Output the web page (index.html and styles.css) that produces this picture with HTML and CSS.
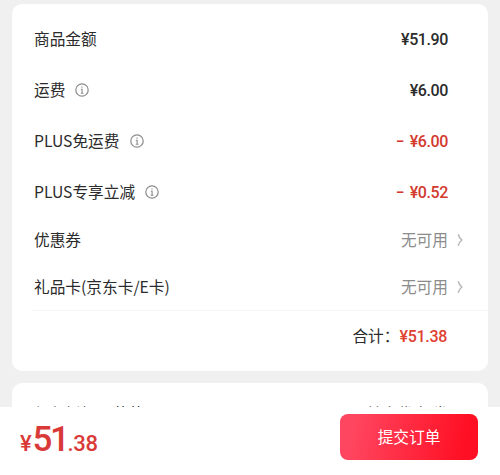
FILE: index.html
```html
<!DOCTYPE html>
<html lang="zh-CN">

<head>
    <meta charset="UTF-8">
    <meta name="viewport" content="width=device-width, initial-scale=1.0">
    <title>确认订单</title>
    <link rel="stylesheet" href="styles.css">
</head>

<body>
    <svg class="symbols" width="0" height="0">
        <symbol id="info" viewBox="0 0 14 14">
            <circle cx="7" cy="7" r="6.2" fill="none" stroke="currentColor" stroke-width="1.2" />
            <path d="M7 3.4v1.4M5.8 6.2H7.1v4M5.8 10.2h2.6" fill="none" stroke="currentColor" stroke-width="1.1" />
        </symbol>
        <symbol id="arrow" viewBox="0 0 6 14">
            <path d="M1.2 1.2C1.8 3.6 3 5.5 4.8 7C3 8.5 1.8 10.4 1.2 12.8" fill="none" stroke="currentColor" stroke-width="1.5" />
        </symbol>
    </svg>

    <main class="content">
        <!-- 金额明细 -->
        <section class="card">
            <div class="row">
                <span class="label">商品金额</span>
                <span class="price">¥51.90</span>
            </div>
            <div class="row">
                <span class="label">运费</span>
                <svg class="info"><use href="#info" /></svg>
                <span class="price">¥6.00</span>
            </div>
            <div class="row">
                <span class="label">PLUS免运费</span>
                <svg class="info"><use href="#info" /></svg>
                <span class="price discount"><span class="minus">–</span>¥6.00</span>
            </div>
            <div class="row">
                <span class="label">PLUS专享立减</span>
                <svg class="info"><use href="#info" /></svg>
                <span class="price discount"><span class="minus">–</span>¥0.52</span>
            </div>
            <div class="row link">
                <span class="label">优惠券</span>
                <span class="none">无可用</span>
                <svg class="arrow"><use href="#arrow" /></svg>
            </div>
            <div class="row link">
                <span class="label">礼品卡(京东卡/E卡)</span>
                <span class="none">无可用</span>
                <svg class="arrow"><use href="#arrow" /></svg>
            </div>
            <div class="total">
                <span class="total-label">合计：</span>
                <span class="total-price">¥51.38</span>
            </div>
        </section>

        <!-- 下一张卡片，被底部栏遮住 -->
        <section class="card">
            <div class="row next">
                <span class="label">红包抵扣、节节</span>
                <span class="none">首次优惠 券</span>
            </div>
        </section>
    </main>

    <!-- 底部提交栏 -->
    <footer class="submit-bar">
        <div class="amount">¥<span class="big">51</span>.38</div>
        <button class="submit-btn">提交订单</button>
    </footer>
</body>

</html>
```
FILE: styles.css
```css
* {
    box-sizing: border-box;
}

body {
    font-family: "Noto Sans CJK SC", sans-serif;
    font-size: 15.7px;
    margin: 0;
    height: 475px;
    background-color: #f0f0f0;
    color: #2b2b2b;
    display: flex;
    flex-direction: column;
    overflow: hidden;
}

.symbols {
    position: absolute;
}

.content {
    height: 407px;
    padding: 4px 12px 0;
    overflow: hidden;
}

.card {
    background-color: #fff;
    border-radius: 10px;
    margin-bottom: 12px;
    padding-top: 9px;
}

.row {
    display: flex;
    align-items: center;
    height: 51px;
    padding: 0 40px 0 22px;
    line-height: 24px;
}

.link {
    height: 46.5px;
    padding-right: 25px;
}

.label {
    white-space: nowrap;
}

.info {
    width: 14px;
    height: 14px;
    margin-left: 10px;
    color: #8c8c8c;
}

.price,
.total-price,
.amount {
    font-family: Roboto, sans-serif;
    font-weight: 500;
}

.price {
    margin-left: auto;
    padding-top: 2px;
    font-size: 16px;
    letter-spacing: -0.4px;
}

.discount {
    color: #d23a2e;
}

.minus {
    display: inline-block;
    margin-right: 5px;
    transform: scaleX(0.8);
}

.none {
    margin-left: auto;
    color: #8c8c8c;
}

.arrow {
    width: 6px;
    height: 14px;
    margin-left: 9px;
    color: #b8b8b8;
}

.total {
    display: flex;
    align-items: center;
    justify-content: flex-end;
    height: 61px;
    margin-left: 20px;
    padding: 0 41px 9px 0;
    border-top: 1px solid #f6f6f6;
}

.total-label {
    margin-top: -2px;
}

.total-price {
    color: #e0402f;
    font-size: 16px;
    letter-spacing: -0.3px;
}

.next {
    height: 43px;
}

.next .none {
    color: #2b2b2b;
}

.submit-bar {
    display: flex;
    align-items: flex-start;
    justify-content: space-between;
    height: 68px;
    padding: 7px 22px 0 20px;
    background-color: #fff;
}

.amount {
    color: #d93a38;
    font-size: 22px;
    line-height: 51px;
    letter-spacing: -0.3px;
}

.big {
    font-size: 35px;
    margin-left: 1px;
    letter-spacing: -2.4px;
}

.submit-btn {
    width: 138px;
    height: 46px;
    padding: 0 0 1px;
    border: none;
    border-radius: 8px;
    background: linear-gradient(100deg, #ff4660 10%, #ff0f23 90%);
    color: #fff;
    font-family: inherit;
    font-size: 15.7px;
}
```
